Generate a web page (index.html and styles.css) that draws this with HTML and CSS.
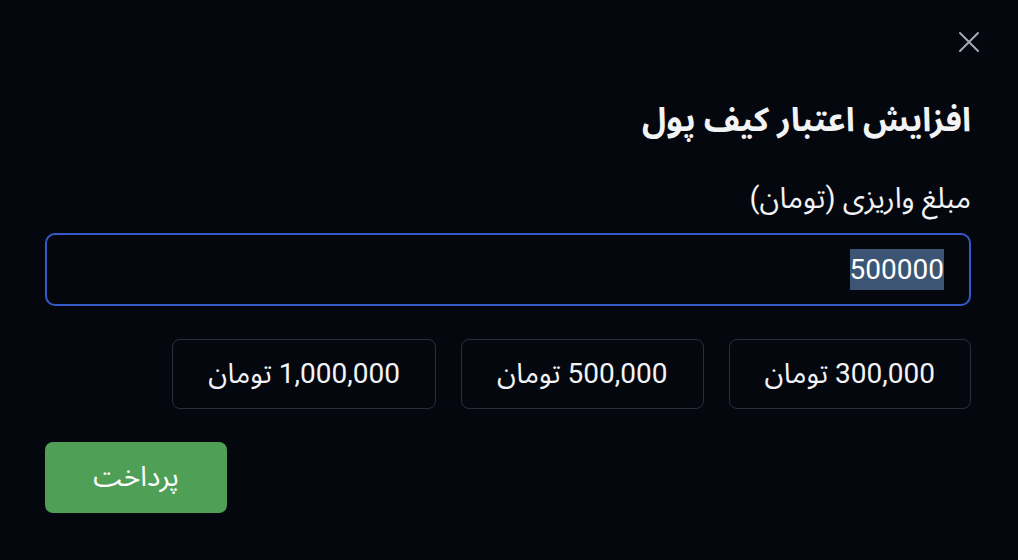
FILE: index.html
```html
<!DOCTYPE html>
<html lang="fa" dir="rtl">
<head>
  <meta charset="UTF-8" />
  <title>افزایش اعتبار کیف پول</title>
  <link rel="stylesheet" href="styles.css">
</head>
<body>
  <div class="modal">
    <button class="close-btn" aria-label="بستن">
      <svg width="22" height="22" viewBox="0 0 22 22"><path d="M2 2L20 20M20 2L2 20" stroke="#a3a8b3" stroke-width="2" stroke-linecap="round"/></svg>
    </button>

    <h2 class="title">افزایش اعتبار کیف پول</h2>

    <label class="label">مبلغ واریزی (تومان)</label>
    <div class="amount-input"><span class="selected">500000</span></div>

    <div class="presets">
      <button class="preset">300,000 تومان</button>
      <button class="preset">500,000 تومان</button>
      <button class="preset">1,000,000 تومان</button>
    </div>

    <button class="pay-btn">پرداخت</button>
  </div>
</body>
</html>
```

FILE: styles.css
```css
* {
  margin: 0;
  padding: 0;
  box-sizing: border-box;
}

body {
  background-color: #05070f;
  color: #f2f3f5;
  font-family: Roboto, "Noto Sans Arabic", "DejaVu Sans", sans-serif;
  height: 560px;
  overflow: hidden;
}

.modal {
  position: relative;
  padding: 96px 47px 0 45px;
}

.close-btn {
  position: absolute;
  top: 31px;
  right: 38px;
  background: none;
  border: none;
  cursor: pointer;
  display: flex;
}

.title {
  font-size: 33px;
  font-weight: bold;
  line-height: 48px;
  margin-bottom: 36px;
}

.label {
  display: block;
  font-size: 29px;
  line-height: 36px;
  margin-bottom: 17px;
}

.amount-input {
  height: 73px;
  border: 2px solid #3659c9;
  border-radius: 10px;
  display: flex;
  align-items: center;
  padding: 0 25px;
  font-size: 28px;
}

.selected {
  background-color: #3d5574;
  color: #fff;
  line-height: 41px;
  direction: ltr;
}

.presets {
  display: flex;
  gap: 25px;
  margin-top: 33px;
}

.preset {
  height: 70px;
  padding: 0 35px;
  background: none;
  border: 1px solid #2b2e39;
  border-radius: 8px;
  color: #f2f3f5;
  font-family: inherit;
  font-size: 28px;
  cursor: pointer;
}

.pay-btn {
  display: block;
  margin-top: 33px;
  width: 182px;
  height: 71px;
  margin-right: auto;
  background-color: #4f9f57;
  border: none;
  border-radius: 8px;
  color: #fff;
  font-family: inherit;
  font-size: 28px;
  cursor: pointer;
}
```
